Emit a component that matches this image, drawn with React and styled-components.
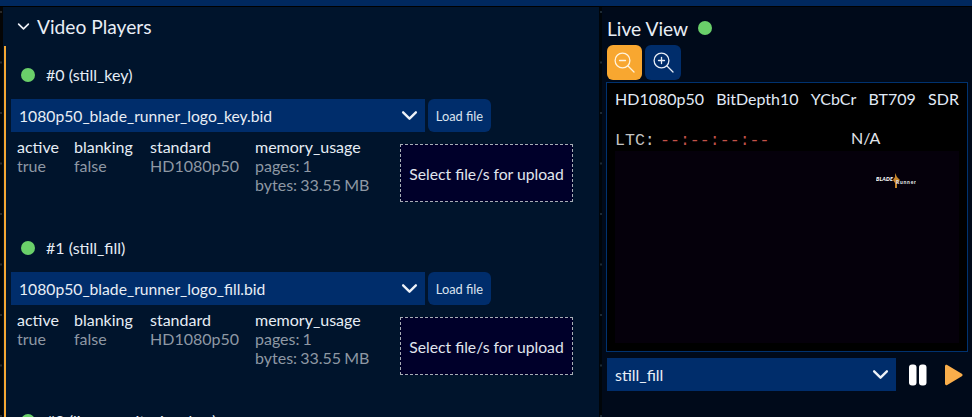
import React from "react";
import styled, { createGlobalStyle } from "styled-components";

const Global = createGlobalStyle`
  html, body { margin: 0; padding: 0; background: #000; }
  * { box-sizing: border-box; }
`;

const Page = styled.div`
  width: 972px; height: 417px; overflow: hidden;
  display: flex; flex-direction: column;
  background: #000; color: #e6edf5;
  font-family: Lato, "Liberation Sans", sans-serif;
  font-size: 16px;
`;
const TopBar = styled.div`
  height: 6px; flex: none; background: #00285e;
`;
const Main = styled.div`
  flex: 1; min-height: 0; display: flex; margin-top: 1px;
`;
const LeftRail = styled.div`
  width: 3px; flex: none; background-color: #050505;
  background-image: linear-gradient(#2a2a2a 2px, transparent 2px);
  background-size: 2px 50.5px; background-repeat: repeat-y;
  background-position: 0 4px;
`;
const LeftPanel = styled.section`
  width: 596px; flex: none; background: #00142c; min-height: 0;
`;
const Splitter = styled.div`
  width: 3px; flex: none; background-color: #000509;
  background-image: linear-gradient(#1c2a35 2px, transparent 2px);
  background-size: 2px 50.5px; background-repeat: repeat-y;
  background-position: 1px 4px;
`;
const RightPanel = styled.section`
  flex: 1; min-width: 0; background: #000a1a;
  padding: 10px 4px 0 5px;
  display: flex; flex-direction: column;
`;
const PanelHead = styled.header`
  display: flex; align-items: center; gap: 7px;
  height: 39px; padding-left: 14px;
  font-size: 19.2px; line-height: 24px; color: #e8eef6;
`;
const PlayerList = styled.div`
  border-left: 2px solid #f5a733;
  margin-left: 1px; padding: 0 0 0 5px;
  height: 400px;
`;
const Player = styled.article`
  height: 173px; padding-top: 20px;
`;
const PlayerTitle = styled.div`
  display: flex; align-items: center; gap: 11px;
  height: 18px; padding-left: 10px; font-size: 16px; line-height: 18px;
`;
const Dot = styled.span`
  width: 14px; height: 14px; border-radius: 50%; flex: none;
  background: #6ad06a;
`;
const FileRow = styled.div`
  display: flex; gap: 3px; margin-top: 15px;
`;
const SelectBox = styled.div`
  width: ${p => p.$w}px; height: 33px; flex: none;
  background: #002d6b; color: #e8eef6;
  display: flex; align-items: center; justify-content: space-between;
  padding: 0 7px 0 8px;
  font-size: ${p => p.$fs || 15.7}px;
`;
const LoadButton = styled.button`
  width: 63px; height: 33px; border: 0; border-radius: 6px; padding: 0;
  background: #002d6b; color: #dbe4ef;
  font: 12.8px Lato, "Liberation Sans", sans-serif;
`;
const InfoRow = styled.div`
  display: flex; align-items: flex-start; margin-top: 12px; padding-left: 6px;
`;
const Column = styled.div`
  width: ${p => p.$w}px; flex: none;
  margin-top: -7px; line-height: 19px;
`;
const Key = styled.div`color: #e6edf5;`;
const Val = styled.div`color: #8e98a4; word-spacing: -1px;`;
const DropZone = styled.div`
  width: 173px; height: 58px; flex: none; padding-top: 2px;
  display: flex; align-items: center; justify-content: center;
  background: #00002a; border: 1px dashed #a8aeb6;
  color: #e0e6ee; font-size: 15.7px;
`;
const LiveHead = styled.header`
  display: flex; align-items: center; gap: 10px;
  height: 24px; margin-bottom: 4px;
  font-size: 19.2px; line-height: 24px; color: #e8eef6;
`;
const LiveDot = styled(Dot)`
  margin-top: -3px;
`;
const ZoomBar = styled.div`
  display: flex; gap: 3px; margin-bottom: 2px;
`;
const ZoomButton = styled.button`
  width: ${p => p.$w}px; height: 35px; border: 0; border-radius: 6px; padding: 0;
  background: ${p => (p.$active ? "#f8a730" : "#002d6b")};
  display: flex; align-items: center; justify-content: center;
`;
const Viewer = styled.div`
  height: 270px; margin-left: -1px; width: 362px;
  background: #000; border: 1px solid #00326f;
  padding: 7px 8px 8px;
  display: flex; flex-direction: column;
`;
const FormatRow = styled.div`
  display: flex; justify-content: space-between;
  font-size: 16px; line-height: 18px; color: #e0eaf6; height: 18px;
`;
const TimeRow = styled.div`
  display: flex; align-items: flex-start; height: 20px; margin-top: 21px;
`;
const Ltc = styled.span`
  font: 16.6px/24px "Liberation Mono", monospace; color: #c4c4c4;
  width: 45px; flex: none;
`;
const Timecode = styled.span`
  font: 16.6px/24px "Liberation Mono", monospace; color: #c2524a;
  width: 191px; flex: none;
`;
const Na = styled.span`
  color: #e0e4ea; font-size: 16px; line-height: 18px;
`;
const Video = styled.div`
  flex: 1; margin-top: 2px; background: #05000b; position: relative;
`;
const Logo = styled.svg`
  position: absolute; left: 261px; top: 22px;
`;
const Controls = styled.div`
  display: flex; align-items: center; margin-top: 6px;
`;
const Transport = styled.button`
  background: none; border: 0; padding: 0; height: 33px;
  display: flex; align-items: center; margin-left: ${p => p.$ml}px;
`;

const Chevron = ({ size = 17, sw = 2.2, color = "#eef2f8" }) => (
  <svg width={size} height={size} viewBox="0 0 16 16" fill="none">
    <path d="M2 5l6 6 6-6" stroke={color} strokeWidth={sw} strokeLinecap="round" strokeLinejoin="round" />
  </svg>
);

const ZoomIcon = ({ plus, color }) => (
  <svg width="21" height="21" viewBox="0 0 21 21" fill="none" stroke={color} strokeWidth="1.3" strokeLinecap="round">
    <circle cx="8.5" cy="8.5" r="7.4" />
    <path d="M14 14 20 20" />
    <path d="M5.5 8.5h6" />
    {plus && <path d="M8.5 5.5v6" />}
  </svg>
);

const PlayerBlock = ({ title, file }) => (
  <Player>
    <PlayerTitle><Dot />{title}</PlayerTitle>
    <FileRow>
      <SelectBox $w={414}>{file}<Chevron /></SelectBox>
      <LoadButton>Load file</LoadButton>
    </FileRow>
    <InfoRow>
      <Column $w={57}><Key>active</Key><Val>true</Val></Column>
      <Column $w={76}><Key>blanking</Key><Val>false</Val></Column>
      <Column $w={105}><Key>standard</Key><Val>HD1080p50</Val></Column>
      <Column $w={145}><Key>memory_usage</Key><Val>pages: 1</Val><Val>bytes: 33.55 MB</Val></Column>
      <DropZone>Select file/s for upload</DropZone>
    </InfoRow>
  </Player>
);

export default function App() {
  return (
    <Page>
      <Global />
      <TopBar />
      <Main>
        <LeftRail />
        <LeftPanel>
          <PanelHead><Chevron size={13} sw={2} />Video Players</PanelHead>
          <PlayerList>
            <PlayerBlock title="#0 (still_key)" file="1080p50_blade_runner_logo_key.bid" />
            <PlayerBlock title="#1 (still_fill)" file="1080p50_blade_runner_logo_fill.bid" />
            <Player>
              <PlayerTitle><Dot />#2 (live_monitoring_key)</PlayerTitle>
            </Player>
          </PlayerList>
        </LeftPanel>
        <Splitter />
        <RightPanel>
          <LiveHead>Live View<LiveDot /></LiveHead>
          <ZoomBar>
            <ZoomButton $w={35} $active><ZoomIcon color="#fff3dc" /></ZoomButton>
            <ZoomButton $w={36}><ZoomIcon plus color="#e8eef6" /></ZoomButton>
          </ZoomBar>
          <Viewer>
            <FormatRow>
              <span>HD1080p50</span><span>BitDepth10</span><span>YCbCr</span><span>BT709</span><span>SDR</span>
            </FormatRow>
            <TimeRow>
              <Ltc>LTC:</Ltc>
              <Timecode>--:--:--:--</Timecode>
              <Na>N/A</Na>
            </TimeRow>
            <Video>
              <Logo width="40" height="15" viewBox="0 0 40 15">
                <path d="M19 0l2 4 3 3-3 3 0 5-2 0 0-5-2-3 2-3z" fill="#c8862a" />
                <text x="0" y="8" fontSize="5.4" fontWeight="900" fontStyle="italic" fill="#ffffff" textLength="17" fontFamily="Lato, sans-serif">BLADE</text>
                <text x="20" y="10.5" fontSize="5" fontWeight="900" fill="#e0e0e0" textLength="20" fontFamily="Lato, sans-serif">Runner</text>
              </Logo>
            </Video>
          </Viewer>
          <Controls>
            <SelectBox $w={289} $fs={16}>still_fill<Chevron /></SelectBox>
            <Transport $ml={13}>
              <svg width="18" height="22" viewBox="0 0 18 22" fill="#fff">
                <rect x="0" y="0.5" width="7.5" height="21" rx="3" />
                <rect x="10" y="0.5" width="7.5" height="21" rx="3" />
              </svg>
            </Transport>
            <Transport $ml={17}>
              <svg width="19" height="22" viewBox="0 0 19 22" fill="#f9ae4b">
                <path d="M1 2.2C1 1 2.2.4 3.2 1l14.6 8.8c1 .6 1 1.9 0 2.5L3.2 21c-1 .6-2.2 0-2.2-1.2z" />
              </svg>
            </Transport>
          </Controls>
        </RightPanel>
      </Main>
    </Page>
  );
}
